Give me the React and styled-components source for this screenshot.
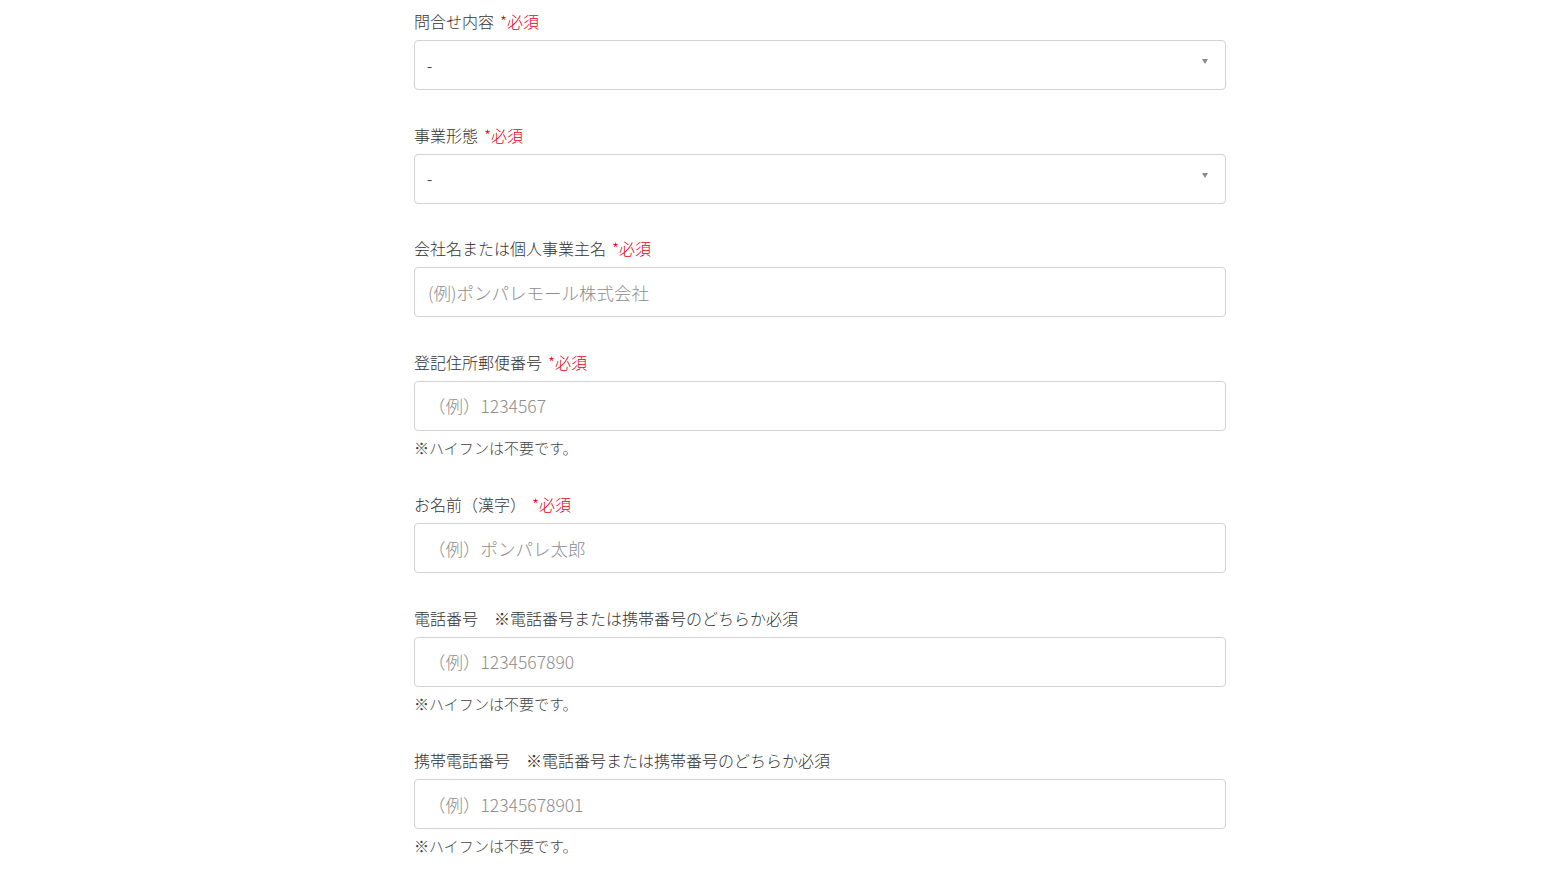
import React from "react";
import styled, { createGlobalStyle } from "styled-components";

const GlobalStyle = createGlobalStyle`
  html, body { margin: 0; padding: 0; background: #fff; }
  body {
    font-family: "Noto Sans CJK JP", "Noto Sans", sans-serif;
    color: #333;
  }
  * { box-sizing: border-box; }
`;

const Page = styled.div`
  display: grid;
  grid-template-columns: 414px 812px 1fr;
  padding-top: 9px;
  min-height: 869px;
`;

const Form = styled.form`
  grid-column: 2;
  display: flex;
  flex-direction: column;
  gap: 32.5px;
`;

const Field = styled.div`
  display: flex;
  flex-direction: column;
`;

const Label = styled.label`
  display: block;
  font-size: 16px;
  line-height: 24px;
  font-weight: 300;
  color: #333;
  margin-bottom: 7px;
  white-space: pre;
`;

const Required = styled.span`
  color: #e60012;
  margin-left: 6px;
`;

const TextInput = styled.input`
  display: block;
  width: 100%;
  height: 50px;
  border: 1px solid #d2d2d2;
  border-radius: 4px;
  padding: 0 13px;
  font-family: inherit;
  font-size: 17.5px;
  font-weight: 300;
  color: #333;
  background: #fff;
  outline: none;
  &::placeholder {
    color: #8e8e8e;
    opacity: 1;
  }
`;

const SelectWrap = styled.div`
  position: relative;
  &::after {
    content: "";
    position: absolute;
    right: 18px;
    top: 19px;
    border-left: 3.5px solid transparent;
    border-right: 3.5px solid transparent;
    border-top: 5px solid #8a8a8a;
    pointer-events: none;
  }
`;

const Select = styled.select`
  appearance: none;
  -webkit-appearance: none;
  display: block;
  width: 100%;
  height: 50px;
  border: 1px solid #d2d2d2;
  border-radius: 4px;
  padding: 0 12px;
  font-family: inherit;
  font-size: 15px;
  color: #444;
  background: #fff;
  outline: none;
`;

const Hint = styled.p`
  margin: 5px 0 0;
  font-size: 15px;
  line-height: 24px;
  font-weight: 300;
  color: #444;
`;

const fields = [
  { type: "select", label: "問合せ内容", required: true },
  { type: "select", label: "事業形態", required: true },
  { label: "会社名または個人事業主名", required: true, placeholder: "(例)ポンパレモール株式会社" },
  { label: "登記住所郵便番号", required: true, placeholder: "（例）1234567", hint: true },
  { label: "お名前（漢字）", required: true, placeholder: "（例）ポンパレ太郎" },
  { label: "電話番号　※電話番号または携帯番号のどちらか必須", placeholder: "（例）1234567890", hint: true },
  { label: "携帯電話番号　※電話番号または携帯番号のどちらか必須", placeholder: "（例）12345678901", hint: true },
];

export default function App() {
  return (
    <>
      <GlobalStyle />
      <Page>
        <Form onSubmit={(e) => e.preventDefault()}>
          {fields.map((f, i) => (
            <Field key={i}>
              <Label>
                {f.label}
                {f.required && <Required>*必須</Required>}
              </Label>
              {f.type === "select" ? (
                <SelectWrap>
                  <Select defaultValue="-">
                    <option value="-">-</option>
                  </Select>
                </SelectWrap>
              ) : (
                <TextInput type="text" placeholder={f.placeholder} />
              )}
              {f.hint && <Hint>※ハイフンは不要です。</Hint>}
            </Field>
          ))}
        </Form>
      </Page>
    </>
  );
}
